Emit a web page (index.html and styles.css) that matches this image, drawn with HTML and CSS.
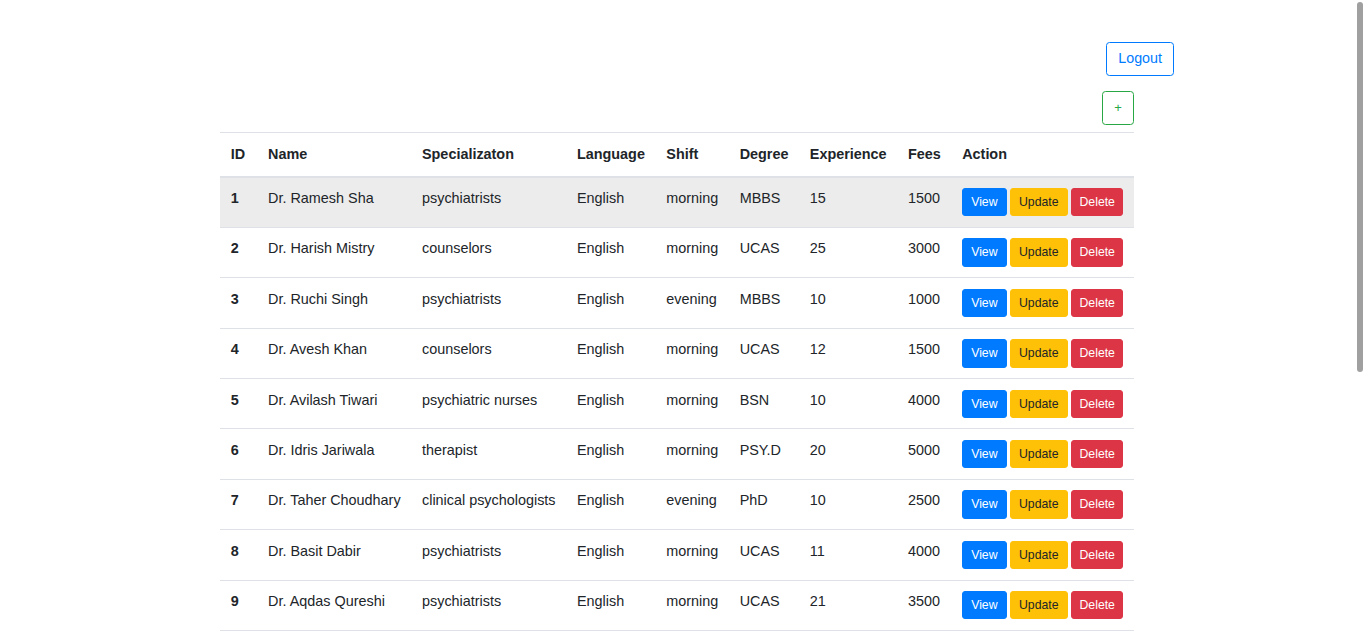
FILE: index.html
```html
<!DOCTYPE html>
<html lang="en">
<head>
<meta charset="utf-8">
<title>Doctors</title>
<link rel="stylesheet" href="styles.css">
</head>
<body>
<header class="topbar">
  <button class="btn btn-outline-primary">Logout</button>
</header>
<main class="content">
  <div class="toolbar">
    <button class="btn btn-outline-success btn-add">+</button>
  </div>
  <table class="table">
    <thead>
      <tr>
        <th>ID</th><th>Name</th><th>Specializaton</th><th>Language</th><th>Shift</th><th>Degree</th><th>Experience</th><th>Fees</th><th>Action</th>
      </tr>
    </thead>
    <tbody>
      <tr class="hover">
        <th>1</th><td>Dr. Ramesh Sha</td><td>psychiatrists</td><td>English</td><td>morning</td><td>MBBS</td><td>15</td><td>1500</td>
        <td class="actions"><button class="btn btn-sm btn-primary">View</button> <button class="btn btn-sm btn-warning">Update</button> <button class="btn btn-sm btn-danger">Delete</button></td>
      </tr>
      <tr>
        <th>2</th><td>Dr. Harish Mistry</td><td>counselors</td><td>English</td><td>morning</td><td>UCAS</td><td>25</td><td>3000</td>
        <td class="actions"><button class="btn btn-sm btn-primary">View</button> <button class="btn btn-sm btn-warning">Update</button> <button class="btn btn-sm btn-danger">Delete</button></td>
      </tr>
      <tr>
        <th>3</th><td>Dr. Ruchi Singh</td><td>psychiatrists</td><td>English</td><td>evening</td><td>MBBS</td><td>10</td><td>1000</td>
        <td class="actions"><button class="btn btn-sm btn-primary">View</button> <button class="btn btn-sm btn-warning">Update</button> <button class="btn btn-sm btn-danger">Delete</button></td>
      </tr>
      <tr>
        <th>4</th><td>Dr. Avesh Khan</td><td>counselors</td><td>English</td><td>morning</td><td>UCAS</td><td>12</td><td>1500</td>
        <td class="actions"><button class="btn btn-sm btn-primary">View</button> <button class="btn btn-sm btn-warning">Update</button> <button class="btn btn-sm btn-danger">Delete</button></td>
      </tr>
      <tr>
        <th>5</th><td>Dr. Avilash Tiwari</td><td>psychiatric nurses</td><td>English</td><td>morning</td><td>BSN</td><td>10</td><td>4000</td>
        <td class="actions"><button class="btn btn-sm btn-primary">View</button> <button class="btn btn-sm btn-warning">Update</button> <button class="btn btn-sm btn-danger">Delete</button></td>
      </tr>
      <tr>
        <th>6</th><td>Dr. Idris Jariwala</td><td>therapist</td><td>English</td><td>morning</td><td>PSY.D</td><td>20</td><td>5000</td>
        <td class="actions"><button class="btn btn-sm btn-primary">View</button> <button class="btn btn-sm btn-warning">Update</button> <button class="btn btn-sm btn-danger">Delete</button></td>
      </tr>
      <tr>
        <th>7</th><td>Dr. Taher Choudhary</td><td>clinical psychologists</td><td>English</td><td>evening</td><td>PhD</td><td>10</td><td>2500</td>
        <td class="actions"><button class="btn btn-sm btn-primary">View</button> <button class="btn btn-sm btn-warning">Update</button> <button class="btn btn-sm btn-danger">Delete</button></td>
      </tr>
      <tr>
        <th>8</th><td>Dr. Basit Dabir</td><td>psychiatrists</td><td>English</td><td>morning</td><td>UCAS</td><td>11</td><td>4000</td>
        <td class="actions"><button class="btn btn-sm btn-primary">View</button> <button class="btn btn-sm btn-warning">Update</button> <button class="btn btn-sm btn-danger">Delete</button></td>
      </tr>
      <tr>
        <th>9</th><td>Dr. Aqdas Qureshi</td><td>psychiatrists</td><td>English</td><td>morning</td><td>UCAS</td><td>21</td><td>3500</td>
        <td class="actions"><button class="btn btn-sm btn-primary">View</button> <button class="btn btn-sm btn-warning">Update</button> <button class="btn btn-sm btn-danger">Delete</button></td>
      </tr>
      <tr>
        <th>10</th><td>Dr. Nilesh Patel</td><td>counselors</td><td>English</td><td>evening</td><td>UCAS</td><td>8</td><td>2000</td>
        <td class="actions"><button class="btn btn-sm btn-primary">View</button> <button class="btn btn-sm btn-warning">Update</button> <button class="btn btn-sm btn-danger">Delete</button></td>
      </tr>
      <tr>
        <th>11</th><td>Dr. Sana Ansari</td><td>therapist</td><td>English</td><td>morning</td><td>PSY.D</td><td>9</td><td>3000</td>
        <td class="actions"><button class="btn btn-sm btn-primary">View</button> <button class="btn btn-sm btn-warning">Update</button> <button class="btn btn-sm btn-danger">Delete</button></td>
      </tr>
      <tr>
        <th>12</th><td>Dr. Meera Joshi</td><td>psychiatrists</td><td>English</td><td>evening</td><td>MBBS</td><td>14</td><td>2500</td>
        <td class="actions"><button class="btn btn-sm btn-primary">View</button> <button class="btn btn-sm btn-warning">Update</button> <button class="btn btn-sm btn-danger">Delete</button></td>
      </tr>
      <tr>
        <th>13</th><td>Dr. Farhan Shaikh</td><td>psychiatric nurses</td><td>English</td><td>morning</td><td>BSN</td><td>6</td><td>1500</td>
        <td class="actions"><button class="btn btn-sm btn-primary">View</button> <button class="btn btn-sm btn-warning">Update</button> <button class="btn btn-sm btn-danger">Delete</button></td>
      </tr>
      <tr>
        <th>14</th><td>Dr. Kavita Rao</td><td>counselors</td><td>English</td><td>morning</td><td>UCAS</td><td>17</td><td>3500</td>
        <td class="actions"><button class="btn btn-sm btn-primary">View</button> <button class="btn btn-sm btn-warning">Update</button> <button class="btn btn-sm btn-danger">Delete</button></td>
      </tr>
      <tr>
        <th>15</th><td>Dr. Imran Lakdawala</td><td>clinical psychologists</td><td>English</td><td>evening</td><td>PhD</td><td>13</td><td>4500</td>
        <td class="actions"><button class="btn btn-sm btn-primary">View</button> <button class="btn btn-sm btn-warning">Update</button> <button class="btn btn-sm btn-danger">Delete</button></td>
      </tr>
      <tr>
        <th>16</th><td>Dr. Pooja Mehta</td><td>therapist</td><td>English</td><td>morning</td><td>PSY.D</td><td>7</td><td>2000</td>
        <td class="actions"><button class="btn btn-sm btn-primary">View</button> <button class="btn btn-sm btn-warning">Update</button> <button class="btn btn-sm btn-danger">Delete</button></td>
      </tr>
      <tr>
        <th>17</th><td>Dr. Yusuf Bohra</td><td>psychiatrists</td><td>English</td><td>morning</td><td>MBBS</td><td>19</td><td>4000</td>
        <td class="actions"><button class="btn btn-sm btn-primary">View</button> <button class="btn btn-sm btn-warning">Update</button> <button class="btn btn-sm btn-danger">Delete</button></td>
      </tr>
      <tr>
        <th>18</th><td>Dr. Rina Desai</td><td>counselors</td><td>English</td><td>evening</td><td>UCAS</td><td>5</td><td>1000</td>
        <td class="actions"><button class="btn btn-sm btn-primary">View</button> <button class="btn btn-sm btn-warning">Update</button> <button class="btn btn-sm btn-danger">Delete</button></td>
      </tr>
    </tbody>
  </table>
</main>
<div class="scroll-thumb" aria-hidden="true"></div>
</body>
</html>
```

FILE: styles.css
```css
* { box-sizing: border-box; }

html, body {
  margin: 0;
  padding: 0;
  background: #fff;
}

body {
  font-family: "Liberation Sans", Arial, Helvetica, sans-serif;
  font-size: 14px;
  line-height: 1.5;
  color: #212529;
}

.topbar {
  display: flex;
  justify-content: flex-end;
  padding-top: 42px;
  padding-right: 192px;
}

.content {
  margin-left: 220px;
  width: fit-content;
  padding-bottom: 8px;
}

.toolbar {
  display: flex;
  justify-content: flex-end;
  margin-top: 15px;
  margin-bottom: 7px;
}

.btn {
  display: inline-block;
  font-family: inherit;
  font-size: 14px;
  line-height: 1.5;
  font-weight: 400;
  padding: 5.25px 10.5px;
  border: 1px solid transparent;
  border-radius: 3.5px;
  background: transparent;
  cursor: pointer;
  text-align: center;
  vertical-align: top;
  margin: 0;
}

.btn-outline-primary {
  color: #007bff;
  border-color: #007bff;
  padding: 5px 11px;
  height: 34px;
  font-size: 14.3px;
}

.btn-outline-success {
  color: #28a745;
  border-color: #28a745;
}

.btn-add {
  width: 32px;
  height: 34px;
  padding: 0;
  font-size: 13px;
}

.btn-sm {
  font-size: 12.25px;
  padding: 4px 8px;
  border-radius: 3px;
}

.btn-danger.btn-sm {
  padding: 4px 7.5px;
}

.btn-primary {
  background: #007bff;
  border-color: #007bff;
  color: #fff;
}

.btn-warning {
  background: #ffc107;
  border-color: #ffc107;
  color: #212529;
}

.btn-danger {
  background: #dc3545;
  border-color: #dc3545;
  color: #fff;
}

.table {
  border-collapse: collapse;
  color: #212529;
  font-size: 14.4px;
}

.table th,
.table td {
  padding: 10.5px 10.7px;
  line-height: 21.5px;
  text-align: left;
  vertical-align: top;
  border-top: 1px solid #dee2e6;
  white-space: nowrap;
}

.table thead th {
  border-bottom: 2px solid #dee2e6;
  font-weight: 700;
}

.table tbody th {
  font-weight: 700;
}

.table tbody tr.hover {
  background: rgba(0, 0, 0, 0.075);
}

.table td.actions {
  line-height: 1;
  font-size: 12.5px;
}

.scroll-thumb {
  position: fixed;
  top: 2px;
  right: 3px;
  width: 6px;
  height: 370px;
  border-radius: 3px;
  background: #a0a0a0;
}
```
